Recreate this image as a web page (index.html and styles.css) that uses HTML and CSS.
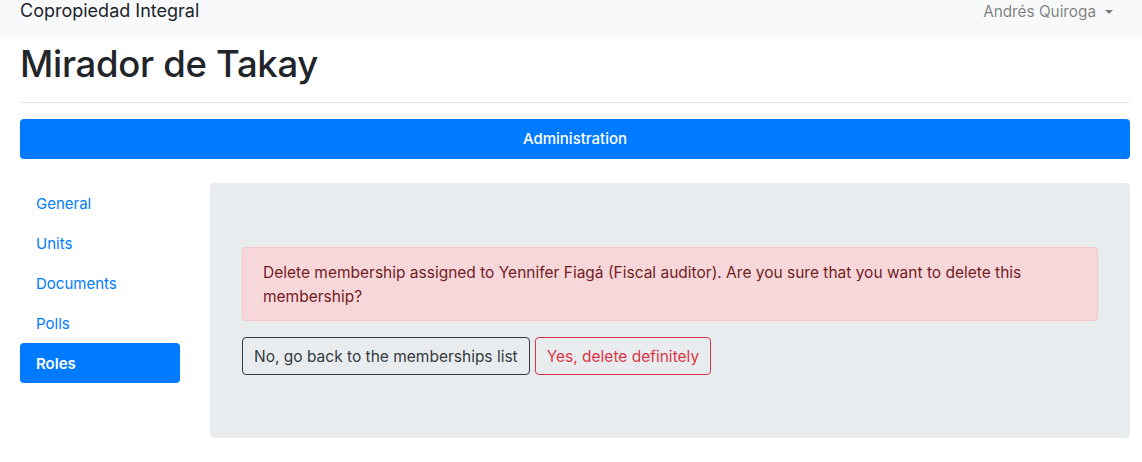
FILE: index.html
```html
<!DOCTYPE html>
<html lang="en">
<head>
<meta charset="utf-8">
<title>Mirador de Takay</title>
<link rel="stylesheet" href="styles.css">
</head>
<body>
<nav class="navbar">
  <span class="brand">Copropiedad Integral</span>
  <span class="user">Andrés Quiroga <span class="caret"></span></span>
</nav>
<main class="container">
  <h1 class="title">Mirador de Takay</h1>
  <hr class="rule">
  <div class="admin">Administration</div>
  <div class="layout">
    <ul class="pills">
      <li><a class="pill">General</a></li>
      <li><a class="pill">Units</a></li>
      <li><a class="pill">Documents</a></li>
      <li><a class="pill">Polls</a></li>
      <li><a class="pill active">Roles</a></li>
    </ul>
    <section class="panel">
      <div class="alert">Delete membership assigned to Yennifer Fiagá (Fiscal auditor). Are you sure that you want to delete this membership?</div>
      <div class="actions">
        <button class="btn btn-dark">No, go back to the memberships list</button>
        <button class="btn btn-danger">Yes, delete definitely</button>
      </div>
    </section>
  </div>
</main>
</body>
</html>
```
FILE: styles.css
```css
* { box-sizing: border-box; }
html, body { margin: 0; padding: 0; }
body {
  font-family: Inter, "Liberation Sans", sans-serif;
  font-size: 16px;
  line-height: 1.5;
  color: #212529;
  background: #fff;
}
.navbar {
  height: 37px;
  background: #f8f9fa;
  display: flex;
  align-items: flex-start;
  justify-content: space-between;
  padding: 0 28px 0 20px;
}
.brand {
  font-size: 18px;
  line-height: 24px;
  color: #212529;
  margin-top: -1px;
}
.user {
  font-size: 15.3px;
  line-height: 24px;
  color: rgba(0,0,0,.5);
  display: flex;
  align-items: center;
  margin-right: 1px;
}
.caret {
  display: inline-block;
  margin-left: 9px;
  border-top: 4.5px solid rgba(0,0,0,.5);
  border-left: 4.5px solid transparent;
  border-right: 4.5px solid transparent;
}
.container {
  padding: 0 12px 0 20px;
}
.title {
  margin: 4px 0 0;
  font-size: 36.5px;
  font-weight: 500;
  line-height: 46px;
  letter-spacing: -0.3px;
}
.rule {
  margin: 15px 0 16px;
  border: 0;
  border-top: 1px solid rgba(0,0,0,.1);
}
.admin {
  height: 40px;
  background: #007bff;
  color: #fff;
  border-radius: 4px;
  display: flex;
  align-items: center;
  justify-content: center;
  font-weight: 500;
  font-size: 15px;
  padding-top: 1px;
}
.layout {
  display: grid;
  grid-template-columns: 160px 1fr;
  column-gap: 30px;
  margin-top: 24px;
}
.pills {
  list-style: none;
  margin: 0;
  padding: 0;
}
.pill {
  display: block;
  padding: 9px 16px 7px;
  color: #007bff;
  border-radius: 4px;
  font-size: 15px;
  line-height: 24px;
}
.pill.active {
  background: #007bff;
  color: #fff;
  font-weight: 600;
}
.panel {
  background: #e9ecef;
  border-radius: 4px;
  padding: 64px 32px 63px;
}
.alert {
  background: #f8d7da;
  border: 1px solid #f5c6cb;
  color: #721c24;
  border-radius: 4px;
  padding: 13px 20px 11px;
  font-size: 15.5px;
  line-height: 24px;
  margin-bottom: 16px;
}
.actions {
  display: flex;
  gap: 5px;
}
.btn {
  font-family: inherit;
  font-size: 15.5px;
  line-height: 24px;
  padding: 7px 11px 5px;
  border-radius: 4px;
  background: transparent;
  cursor: pointer;
}
.btn-dark { border: 1px solid #343a40; color: #343a40; }
.btn-danger { border: 1px solid #dc3545; color: #dc3545; }
```
